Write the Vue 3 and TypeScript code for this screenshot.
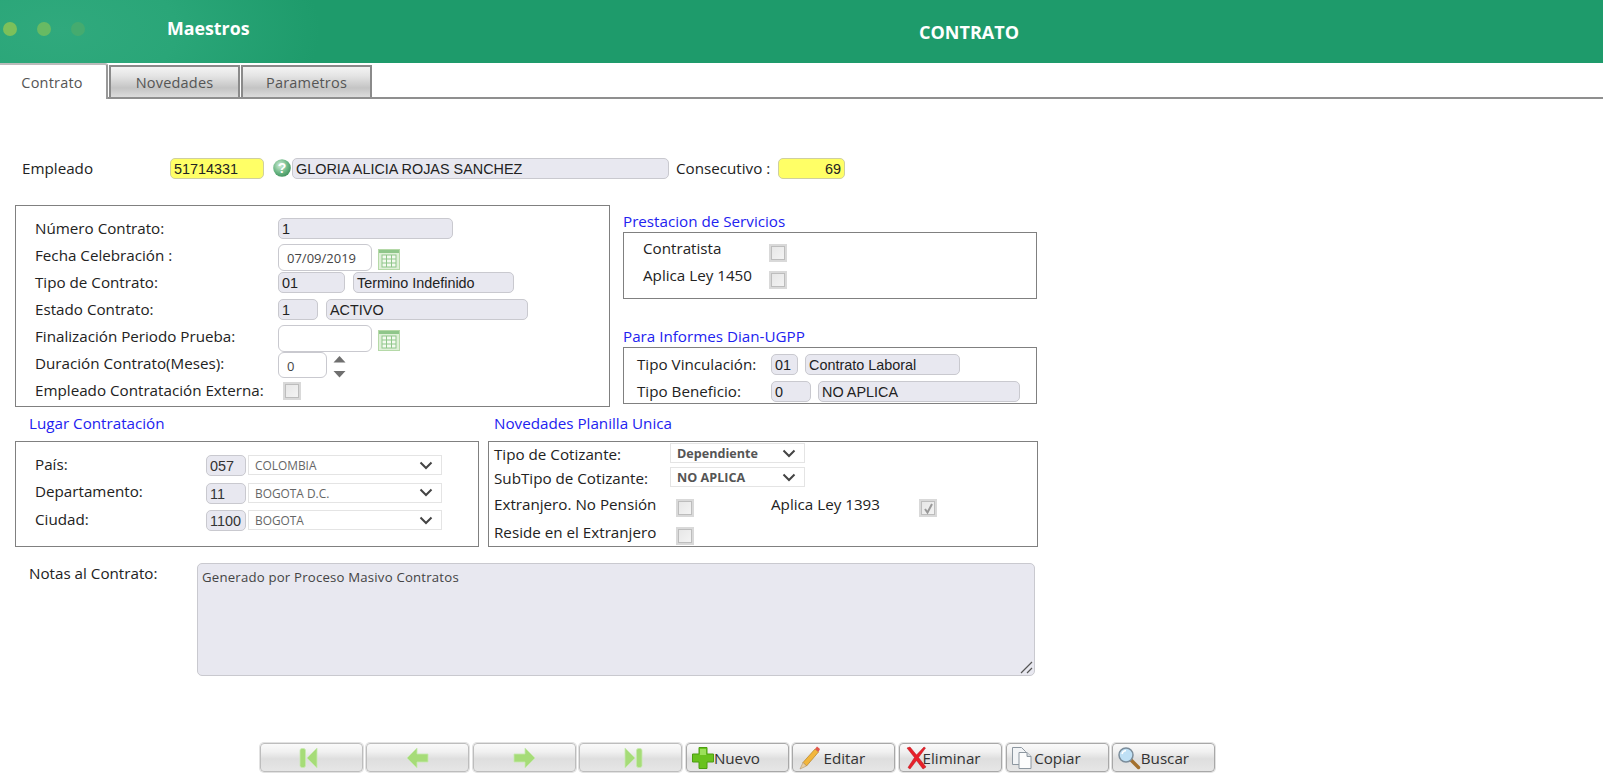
<script setup lang="ts">
const navIcons = ['first', 'prev', 'next', 'last']
const actions = [
  { key: 'plus', label: 'Nuevo' },
  { key: 'pencil', label: 'Editar' },
  { key: 'x', label: 'Eliminar' },
  { key: 'copy', label: 'Copiar' },
  { key: 'search', label: 'Buscar' }
]
const lugar = [
  { label: 'País:', code: '057', name: 'COLOMBIA' },
  { label: 'Departamento:', code: '11', name: 'BOGOTA D.C.' },
  { label: 'Ciudad:', code: '1100', name: 'BOGOTA' }
]
</script>

<template>
  <div class="page">
    <header class="top">
      <div class="dots"><i class="d1"></i><i class="d2"></i><i class="d3"></i></div>
      <div class="maestros">Maestros</div>
      <div class="title">CONTRATO</div>
    </header>

    <nav class="tabs">
      <div class="tab active">Contrato</div>
      <div class="tab">Novedades</div>
      <div class="tab">Parametros</div>
    </nav>

    <main class="form">
      <div class="emp-row">
        <span class="lbl emp-lbl">Empleado</span>
        <div class="fld yellow w-emp">51714331</div>
        <svg class="help" width="18" height="20" viewBox="0 0 18 20">
          <defs>
            <radialGradient id="hg" cx="0.4" cy="0.35" r="0.7">
              <stop offset="0" stop-color="#d5efd9" />
              <stop offset="0.6" stop-color="#6db886" />
              <stop offset="1" stop-color="#3d8f5a" />
            </radialGradient>
          </defs>
          <circle cx="9" cy="10" r="8.800" fill="url(#hg)" />
          <text x="9" y="15" text-anchor="middle" class="help-q">?</text>
        </svg>
        <div class="fld w-name">GLORIA ALICIA ROJAS SANCHEZ</div>
        <span class="lbl cons-lbl">Consecutivo :</span>
        <div class="fld yellow w-cons right">69</div>
      </div>

      <div class="mid">
        <section class="box box-main">
          <span class="lbl">Número Contrato:</span>
          <div class="cell"><div class="fld w-num">1</div></div>
          <span class="lbl">Fecha Celebración :</span>
          <div class="cell low">
            <div class="fld date">07/09/2019</div>
            <svg class="cal" width="22" height="21" viewBox="0 0 22 21">
              <rect x="0.5" y="0.5" width="21" height="20" fill="#dff0d8" stroke="#b5d9a8" />
              <rect x="1" y="1" width="20" height="3" fill="#8fc68a" />
              <rect x="4" y="6" width="14" height="12" fill="#f4faf0" stroke="#8fc68a" />
              <path d="M4 10h14M4 14h14M8.500 6v12M13.500 6v12" stroke="#8fc68a" fill="none" />
            </svg>
          </div>
          <span class="lbl">Tipo de Contrato:</span>
          <div class="cell"><div class="fld w-c67">01</div><div class="fld w-d161">Termino Indefinido</div></div>
          <span class="lbl">Estado Contrato:</span>
          <div class="cell"><div class="fld w-c40">1</div><div class="fld w-d202">ACTIVO</div></div>
          <span class="lbl">Finalización Periodo Prueba:</span>
          <div class="cell low">
            <div class="fld date"></div>
            <svg class="cal" width="22" height="21" viewBox="0 0 22 21">
              <rect x="0.5" y="0.5" width="21" height="20" fill="#dff0d8" stroke="#b5d9a8" />
              <rect x="1" y="1" width="20" height="3" fill="#8fc68a" />
              <rect x="4" y="6" width="14" height="12" fill="#f4faf0" stroke="#8fc68a" />
              <path d="M4 10h14M4 14h14M8.500 6v12M13.500 6v12" stroke="#8fc68a" fill="none" />
            </svg>
          </div>
          <span class="lbl">Duración Contrato(Meses):</span>
          <div class="cell low">
            <div class="fld date w-spin">0</div>
            <svg class="spin" width="13" height="24" viewBox="0 0 13 24">
              <path d="M6.500 1l6 6.500H.5z" fill="#6f6f6f" />
              <path d="M.5 16h12l-6 6.500z" fill="#6f6f6f" />
            </svg>
          </div>
          <span class="lbl">Empleado Contratación Externa:</span>
          <div class="cell low check-cell"><i class="chk"></i></div>
        </section>

        <div class="side">
          <h3 class="legend">Prestacion de Servicios</h3>
          <section class="box box-prest">
            <span class="lbl">Contratista</span><i class="chk"></i>
            <span class="lbl">Aplica Ley 1450</span><i class="chk"></i>
          </section>
          <h3 class="legend dian">Para Informes Dian-UGPP</h3>
          <section class="box box-dian">
            <span class="lbl">Tipo Vinculación:</span>
            <div class="cell"><div class="fld w-c27">01</div><div class="fld w-d155">Contrato Laboral</div></div>
            <span class="lbl">Tipo Beneficio:</span>
            <div class="cell"><div class="fld w-c40 sm">0</div><div class="fld w-d202">NO APLICA</div></div>
          </section>
        </div>
      </div>

      <div class="lower">
        <div class="col-lugar">
          <h3 class="legend lugar-t">Lugar Contratación</h3>
          <section class="box box-lugar">
            <template v-for="r in lugar" :key="r.code">
              <span class="lbl">{{ r.label }}</span>
              <div class="cell">
                <div class="fld w-code">{{ r.code }}</div>
                <div class="sel w-sel">
                  <span>{{ r.name }}</span>
                  <svg width="14" height="9" viewBox="0 0 14 9"><path d="M1.500 1.500L7 7l5.500-5.500" fill="none" stroke="#444" stroke-width="2" /></svg>
                </div>
              </div>
            </template>
          </section>
        </div>
        <div class="col-nov">
          <h3 class="legend nov-t">Novedades Planilla Unica</h3>
          <section class="box box-nov">
            <div class="nov-sel">
              <span class="lbl">Tipo de Cotizante:</span>
              <div class="sel bold"><span>Dependiente</span><svg width="14" height="9" viewBox="0 0 14 9"><path d="M1.500 1.500L7 7l5.500-5.500" fill="none" stroke="#444" stroke-width="2" /></svg></div>
              <span class="lbl">SubTipo de Cotizante:</span>
              <div class="sel bold"><span>NO APLICA</span><svg width="14" height="9" viewBox="0 0 14 9"><path d="M1.500 1.500L7 7l5.500-5.500" fill="none" stroke="#444" stroke-width="2" /></svg></div>
            </div>
            <div class="nov-checks">
              <span class="lbl">Extranjero. No Pensión</span><i class="chk"></i>
              <span class="lbl ley">Aplica Ley 1393</span>
              <i class="chk checked">
                <svg width="13" height="13" viewBox="0 0 13 13"><path d="M3 7l2.500 3.500L10 2" fill="none" stroke="#999" stroke-width="2" /></svg>
              </i>
              <span class="lbl">Reside en el Extranjero</span><i class="chk"></i>
            </div>
          </section>
        </div>
      </div>

      <div class="notes">
        <span class="lbl notes-lbl">Notas al Contrato:</span>
        <div class="area">
          Generado por Proceso Masivo Contratos
          <svg class="grip" width="13" height="13" viewBox="0 0 13 13"><path d="M1 12L12 1M7 12l5-5" stroke="#555" stroke-width="1.200" fill="none" /></svg>
        </div>
      </div>
    </main>

    <footer class="bar">
      <button v-for="n in navIcons" :key="n" class="btn nav" type="button">
        <svg width="24" height="22" viewBox="0 0 24 22">
          <g fill="#a6dc78" stroke="#c8eab0" stroke-width="0.800">
            <template v-if="n === 'first'"><rect x="1" y="1.500" width="5.500" height="19" rx="2" /><path d="M8 11l10-10v20z" /></template>
            <template v-else-if="n === 'prev'"><path d="M1 11l10-10v6h11v8H11v6z" /></template>
            <template v-else-if="n === 'next'"><path d="M23 11L13 1v6H2v8h11v6z" /></template>
            <template v-else><rect x="17.500" y="1.500" width="5.500" height="19" rx="2" /><path d="M16 11L6 1v20z" /></template>
          </g>
        </svg>
      </button>
      <button v-for="a in actions" :key="a.key" class="btn act" :class="a.key" type="button">
        <svg width="24" height="24" viewBox="0 0 24 24">
          <template v-if="a.key === 'plus'">
            <path d="M8 1.500h8v6.500h6.500v8H16v6.500H8V16H1.500V8H8z" fill="#69c21e" stroke="#4c9e10" />
            <path d="M9 3h6v6H9z" fill="#9be05a" />
          </template>
          <template v-else-if="a.key === 'pencil'">
            <path d="M6 16.500L18 3l3.500 3L9.500 20z" fill="#f2b63c" stroke="#b58124" stroke-width="0.700" />
            <path d="M6 16.500L9.500 20 3 23z" fill="#e8cfa5" stroke="#a98a5c" stroke-width="0.500" />
            <path d="M18 3l2-2.500 3 2.500-1.500 3z" fill="#e2574c" />
          </template>
          <template v-else-if="a.key === 'x'">
            <path d="M3 2l3-1 6.500 8L20 1l1.500 1-7 9.500L22 21l-3 2-6.500-8.500L6 23l-2-1.500 6.500-10z" fill="#e8202a" stroke="#b5121a" stroke-width="0.500" />
          </template>
          <template v-else-if="a.key === 'copy'">
            <path d="M1.500 1.500h9l4 4v13h-13z" fill="#f2f4f6" stroke="#8d97a0" />
            <path d="M8 6.500h8l4 4v12H8z" fill="#fdfdfd" stroke="#8d97a0" />
            <path d="M16 6.500v4h4" fill="#d8dde2" stroke="#8d97a0" />
          </template>
          <template v-else>
            <path d="M14 14l7.500 7.500" stroke="#a3702e" stroke-width="3.500" stroke-linecap="round" />
            <circle cx="9" cy="9" r="7" fill="#bfe0f5" stroke="#7b8c9a" stroke-width="1.500" />
            <path d="M5 8a4.500 4.500 0 0 1 4-3.500" stroke="#fff" stroke-width="1.500" fill="none" />
          </template>
        </svg>
        <span>{{ a.label }}</span>
      </button>
    </footer>
  </div>
</template>

<style>
html, body { margin: 0; background: #fff; }
</style>

<style scoped>
.page {
  width: 1603px;
  height: 774px;
  overflow: hidden;
  display: flex;
  flex-direction: column;
  font-family: "Open Sans", "Noto Sans", sans-serif;
  font-size: 15.200px;
  color: #222;
}
.top {
  height: 63px;
  flex: none;
  display: flex;
  align-items: center;
  background: radial-gradient(ellipse 260px 130px at 60px 30px, #30a97d 0%, #2aa678 45%, #1e9b6b 100%);
  color: #fff;
  font-weight: 700;
}
.dots { display: flex; gap: 20px; margin-left: 3px; width: 164px; margin-top: -5px; }
.dots i { width: 14px; height: 14px; border-radius: 50%; display: block; }
.d1 { background: #7cc05a; }
.d2 { background: #68ba63; }
.d3 { background: #45ab6f; }
.maestros { font-size: 17.800px; width: 400px; margin-top: -7px; }
.title { width: 804px; text-align: center; font-size: 18px; }

.tabs {
  height: 36px;
  flex: none;
  display: flex;
  align-items: flex-end;
  border-bottom: 2px solid #8f8f8f;
  box-sizing: border-box;
  position: relative;
}
.tab {
  width: 131px;
  height: 32px;
  margin-right: 1px;
  box-sizing: border-box;
  border: 2px solid #8a8a8a;
  border-bottom: 0;
  background: linear-gradient(#f4f4f4 0%, #e4e4e4 30%, #c4c4c4 70%, #dcdcdc 100%);
  display: flex;
  align-items: center;
  justify-content: center;
  color: #555;
  font-size: 14.500px;
  letter-spacing: 0.2px;
}
.tab.active {
  width: 108px;
  height: 36px;
  margin-bottom: -2px;
  padding-right: 2px;
  background: #fff;
  border: 0;
  border-top: 2px solid #bbb;
  border-right: 2px solid #999;
  border-top-right-radius: 3px;
}

.form { flex: 1; display: flex; flex-direction: column; padding-left: 15px; }
.lbl { white-space: nowrap; line-height: 20px; }
.fld {
  box-sizing: border-box;
  height: 21px;
  background: #e8e8f0;
  border: 1px solid #c9c9cf;
  border-radius: 5px;
  font-family: "Liberation Sans", Arial, sans-serif;
  font-size: 14.400px;
  line-height: 19px;
  padding: 1px 3px 0;
  color: #222;
  white-space: nowrap;
  overflow: hidden;
  flex: none;
}
.yellow { background: #ffff66; border-color: #cfcfa0; }
.right { text-align: right; }
.emp-row { display: flex; align-items: center; margin-top: 59px; height: 20px; padding-left: 7px; }
.emp-lbl { width: 148px; }
.w-emp { width: 94px; }
.help { margin-left: 9px; margin-right: 1px; flex: none; }
.help-q { font: 700 14px "Liberation Sans", sans-serif; fill: #fff; }
.w-name { width: 377px; }
.cons-lbl { margin-left: 7px; width: 102px; }
.w-cons { width: 67px; }

.mid { display: flex; margin-top: 27px; }
.box { border: 1px solid #808080; box-sizing: border-box; }
.box-main {
  width: 595px;
  height: 202px;
  padding: 9px 0 0 19px;
  display: grid;
  grid-template-columns: 243px 1fr;
  grid-auto-rows: 27px;
}
.cell { display: flex; gap: 8px; align-items: flex-start; margin-top: 3px; }
.box-main .lbl { margin-top: 2.500px; }
.date { width: 94px; height: 27px; background: #fff; line-height: 27px; padding: 0 0 0 8px; border-radius: 6px; font-family: "Open Sans", sans-serif; font-size: 13px; color: #444; margin-top: -1px; }
.w-spin { width: 49px; height: 26px; }
.cal { margin-top: 4px; margin-left: -2px; flex: none; }
.spin { margin-left: -2px; margin-top: 2px; flex: none; }
.check-cell { padding-left: 5px; margin-top: 5px; }
.w-num { width: 175px; }
.w-c67 { width: 67px; }
.w-d161 { width: 161px; }
.w-c40 { width: 40px; }
.w-d202 { width: 202px; }
.chk {
  display: flex;
  align-items: center;
  justify-content: center;
  box-sizing: border-box;
  width: 18px;
  height: 18px;
  border: 2px solid #d9d9d9;
  background: linear-gradient(135deg, #e6e6e6, #f4f4f4);
  box-shadow: inset 0 0 0 1px #bdbdbd;
  flex: none;
}

.side { margin-left: 13px; width: 414px; }
.legend {
  margin: 0;
  font-weight: 400;
  font-size: 15.200px;
  line-height: 20px;
  color: #2222f0;
  white-space: nowrap;
}
.side .legend { margin-top: 6px; }
.side .legend.dian { margin-top: 27px; }
.box-prest {
  height: 67px;
  margin-top: 1px;
  padding: 6px 0 0 19px;
  display: grid;
  grid-template-columns: 126px 1fr;
  grid-auto-rows: 27px;
  align-items: start;
}
.box-prest .chk { margin-top: 5px; }
.box-prest .lbl { margin-top: -1px; }
.box-dian {
  height: 57px;
  margin-top: 1px;
  padding: 6px 0 0 13px;
  display: grid;
  grid-template-columns: 134px 1fr;
  grid-auto-rows: 27px;
}
.box-dian .cell { margin-top: 0; gap: 7px; }
.w-c27 { width: 27px; }
.w-d155 { width: 155px; }
.sm { width: 40px; }

.lower { display: flex; margin-top: 6px; }
.col-lugar { width: 473px; }
.lugar-t { padding-left: 14px; }
.box-lugar {
  width: 464px;
  height: 106px;
  margin-top: 8px;
  padding: 12px 0 0 19px;
  display: grid;
  grid-template-columns: 171px 1fr;
  grid-auto-rows: 27.500px;
}
.box-lugar .cell { margin-top: 1px; gap: 2px; }
.box-lugar .lbl { margin-top: -0.500px; }
.w-code { width: 40px; color: #333; }
.sel {
  box-sizing: border-box;
  height: 20px;
  border: 1px solid #e4e4e4;
  background: #fff;
  display: flex;
  align-items: center;
  justify-content: space-between;
  padding: 0 8px 0 6px;
  font-size: 11.900px;
  color: #666;
  flex: none;
}
.w-sel { width: 194px; }
.nov-t { padding-left: 6px; }
.box-nov {
  width: 550px;
  height: 106px;
  margin-top: 8px;
  padding: 2px 0 0 5px;
}
.nov-sel {
  display: grid;
  grid-template-columns: 176px 135px;
  grid-auto-rows: 24px;
  align-items: start;
}
.nov-sel .sel { width: 135px; font-weight: 700; font-size: 12.600px; margin-top: -1px; color: #555; }
.nov-checks {
  display: grid;
  grid-template-columns: 182px 95px 148px 18px;
  grid-auto-rows: 28px;
  margin-top: 2px;
  align-items: start;
}
.nov-checks .chk { margin-top: 5px; }

.notes { display: flex; margin-top: 16px; padding-left: 14px; }
.notes-lbl { width: 168px; }
.area {
  position: relative;
  box-sizing: border-box;
  width: 838px;
  height: 113px;
  background: #e8e8f0;
  border: 1px solid #c9c9cf;
  border-radius: 5px;
  padding: 4px;
  font-size: 13.200px;
  line-height: 18px;
  color: #444;
  letter-spacing: 0.2px;
}
.grip { position: absolute; right: 1px; bottom: 1px; }

.bar { display: flex; gap: 3.600px; padding-left: 259.500px; margin-bottom: 2px; }
.btn {
  width: 103px;
  height: 29px;
  padding: 0;
  border: 1px solid #bdbdbd;
  border-radius: 4px;
  box-shadow: 0 0 0 1px #e2e2e2;
  background: linear-gradient(#fafafa 0%, #f0f0f0 30%, #dedede 55%, #e6e6e6 100%);
  display: flex;
  align-items: center;
  justify-content: center;
  font-family: inherit;
  font-size: 15.200px;
  color: #333;
}
.btn.act { justify-content: flex-start; padding-left: 4px; border-color: #a8a8a8; }
.btn svg { flex: none; }
.btn.plus svg { margin-right: -1px; }
.btn.pencil svg { margin-right: 2px; }
.btn.x svg { margin-right: -5.500px; }
.btn.copy svg, .btn.search svg { margin-right: -0.500px; }
</style>
